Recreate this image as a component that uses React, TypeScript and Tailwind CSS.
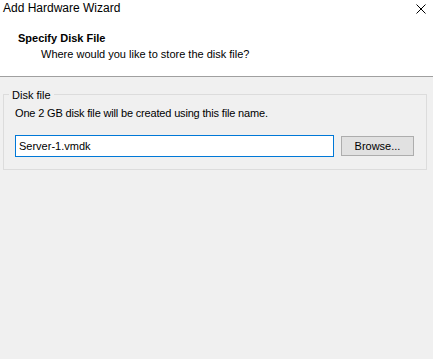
import React from "react";

export default function App() {
  const font = { fontFamily: '"Liberation Sans", Arial, sans-serif' };
  return (
    <div className="w-[433px] h-[359px] bg-[#f0f0f0] flex flex-col text-[11px] text-black" style={font}>
      <div className="bg-white h-[77px] flex flex-col border-b border-[#a0a0a0] relative">
        <div className="h-[16px] flex items-center pl-[3px] text-[12px] leading-[16px] text-black">Add Hardware Wizard</div>
        <svg className="absolute right-[7px] top-[4px]" width="10" height="10" viewBox="0 0 10 10">
          <path d="M0.5 0.5L9.5 9.5M9.5 0.5L0.5 9.5" stroke="#000" strokeWidth="1" />
        </svg>
        <div className="pl-[18px] mt-[14px] font-bold leading-[16px]">Specify Disk File</div>
        <div className="pl-[41px] leading-[16px]">Where would you like to store the disk file?</div>
      </div>
      <fieldset className="ml-[3px] mr-[6px] mt-[8px] border border-[#dcdcdc] px-[11px] pb-[12px]">
        <legend className="ml-[-6px] px-[3px] pt-[2px] leading-[16px]">Disk file</legend>
        <div className="leading-[16px] mt-[2px] tracking-[-0.17px]">One 2 GB disk file will be created using this file name.</div>
        <div className="flex items-start mt-[14px] gap-[7px]">
          <div className="w-[319px] h-[22px] border border-[#0078d7] bg-white flex items-center pl-[3px]">Server-1.vmdk</div>
          <div className="w-[73px] h-[20px] mt-[1px] border border-[#adadad] bg-[#e1e1e1] flex items-center justify-center">Browse...</div>
        </div>
      </fieldset>
    </div>
  );
}
